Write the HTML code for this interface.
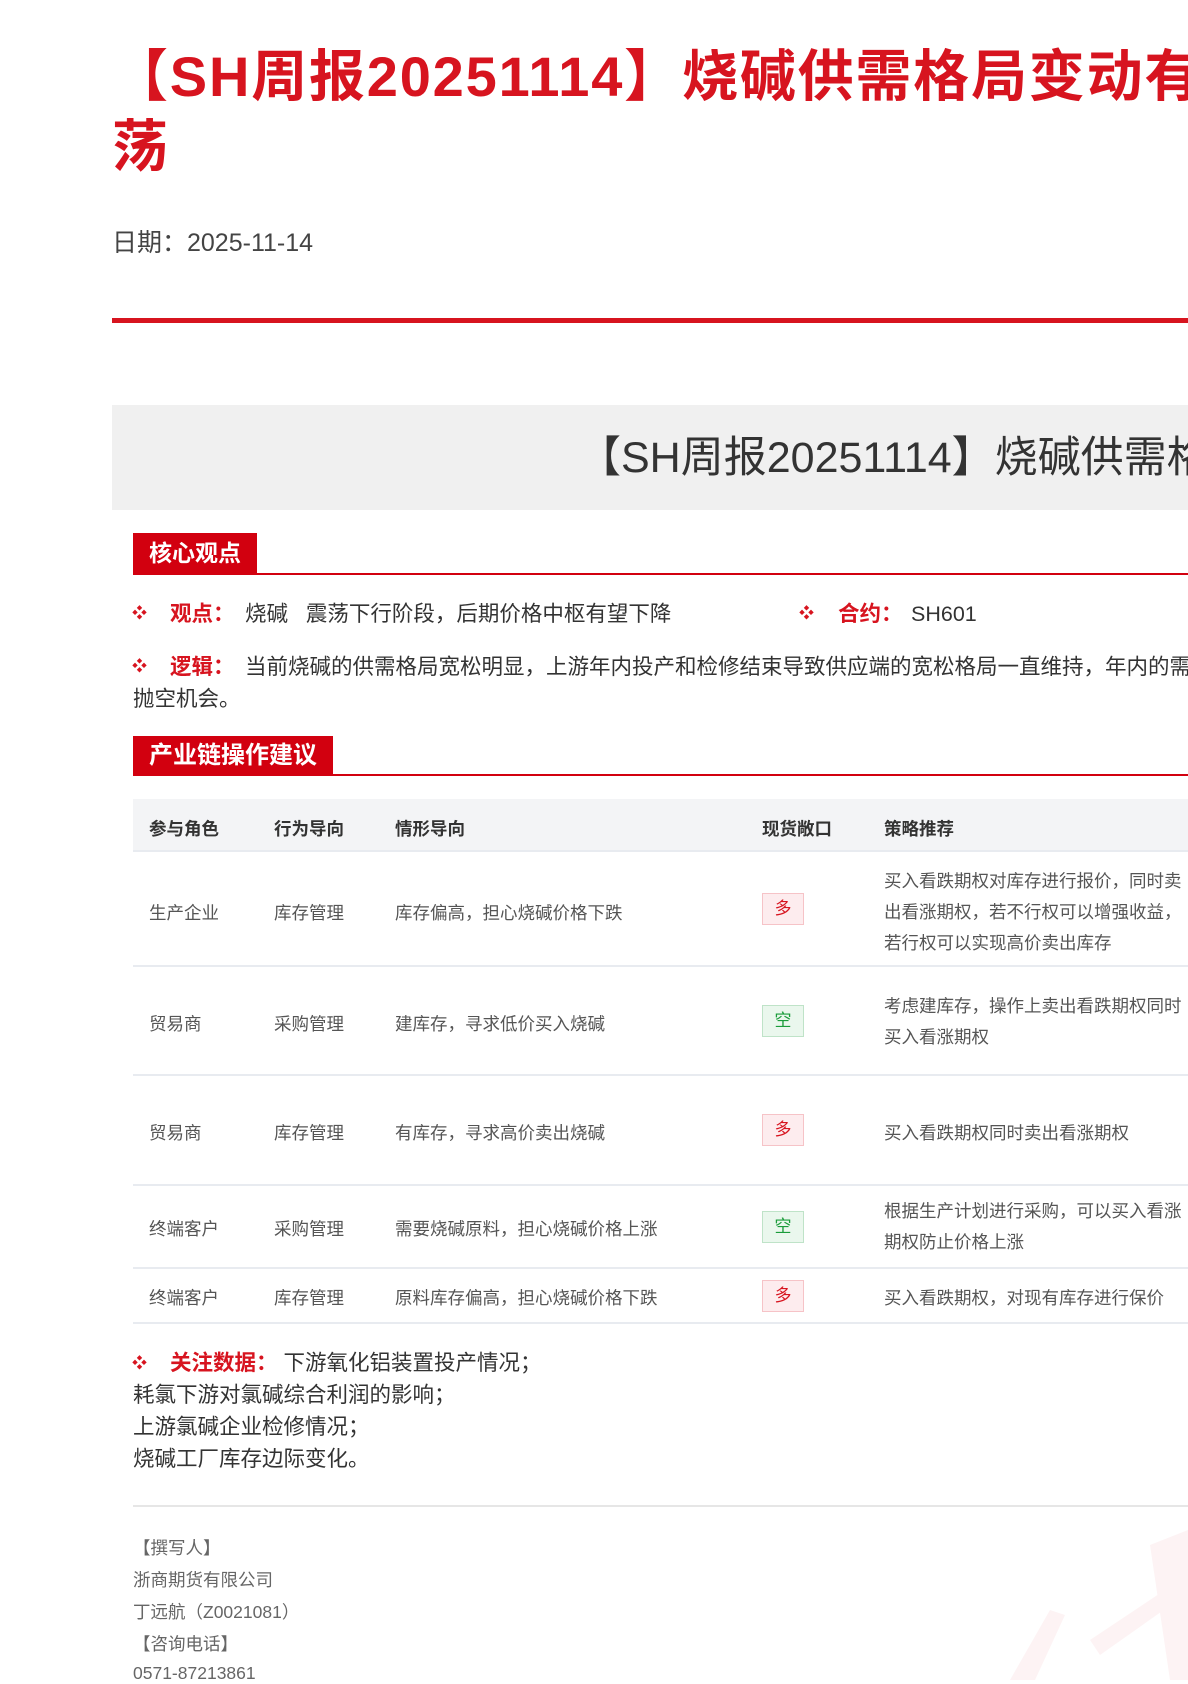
<!DOCTYPE html>
<html><head><meta charset="utf-8"><style>
*{margin:0;padding:0;box-sizing:border-box}
body{width:1188px;height:1680px;overflow:hidden;background:#fff;position:relative;font-family:"Liberation Sans","Noto Sans CJK SC",sans-serif;color:#333}
.a{position:absolute;white-space:nowrap}
.t{color:#d7141f;font-weight:bold;font-size:56px;line-height:70px;letter-spacing:1.8px}
.red{color:#d7141f}
.tag{position:absolute;left:133px;background:#d2000f;color:#fff;font-size:23px;font-weight:bold;padding:0 16px}
.hl{position:absolute;left:133px;right:0;height:2px;background:#d2000f}
.dia{position:absolute;color:#d7141f;font-size:15px;line-height:15px}
.b{font-size:21.5px;line-height:26px}
.th{font-size:17.5px;font-weight:bold;color:#333}
.td{font-size:17.5px;color:#555}
.row{position:absolute;left:133px;right:0;border-bottom:2px solid #e8ebf0}
.bd{position:absolute;left:762px;width:42px;height:32px;font-size:17px;line-height:30px;text-align:center;border:1px solid}
.duo{color:#d7141f;background:#fdecee;border-color:#f6c3c7}
.kong{color:#1a9c3a;background:#eaf7ed;border-color:#bfe3c8}
.w{font-size:17.5px;color:#666}
</style></head><body>
<div class="a t" style="left:112px;top:42px">【SH周报20251114】烧碱供需格局变动有限，价格震荡</div>
<div class="a t" style="left:112px;top:112px">荡</div>
<div class="a" style="left:112px;top:223px;font-size:25px;color:#444">日期：2025-11-14</div>
<div class="a" style="left:112px;right:0;top:318px;height:5px;background:#d7141f"></div>
<div class="a" style="left:112px;right:0;top:405px;height:105px;background:#f0f0f0"></div>
<div class="a" style="left:578px;top:432px;font-size:43px;line-height:52px;color:#333">【SH周报20251114】烧碱供需格局变动有限</div>

<div class="tag" style="top:533px;height:41px;line-height:41px">核心观点</div>
<div class="hl" style="top:573px"></div>
<div class="dia" style="left:132px;top:606px">❖</div>
<div class="a b" style="left:170px;top:601px"><b class="red">观点：</b></div>
<div class="a b" style="left:245px;top:601px">烧碱&nbsp;&nbsp;&nbsp;震荡下行阶段，后期价格中枢有望下降</div>
<div class="dia" style="left:799px;top:606px">❖</div>
<div class="a b" style="left:838px;top:601px"><b class="red">合约：</b></div>
<div class="a b" style="left:911px;top:601px">SH601</div>
<div class="dia" style="left:132px;top:659px">❖</div>
<div class="a b" style="left:170px;top:654px"><b class="red">逻辑：</b></div>
<div class="a b" style="left:245px;top:654px">当前烧碱的供需格局宽松明显，上游年内投产和检修结束导致供应端的宽松格局一直维持，年内的需求</div>
<div class="a b" style="left:133px;top:686px">抛空机会。</div>

<div class="tag" style="top:736px;height:39px;line-height:39px;font-size:24px">产业链操作建议</div>
<div class="hl" style="top:774px"></div>

<div class="a" style="left:133px;right:0;top:799px;height:53px;background:#f3f4f6;border-bottom:2px solid #e8ebf0"></div>
<div class="a th" style="left:149px;top:816px">参与角色</div>
<div class="a th" style="left:274px;top:816px">行为导向</div>
<div class="a th" style="left:395px;top:816px">情形导向</div>
<div class="a th" style="left:762px;top:816px">现货敞口</div>
<div class="a th" style="left:884px;top:816px">策略推荐</div>

<div class="row" style="top:852px;height:115px"></div>
<div class="a td" style="left:149px;top:900px">生产企业</div>
<div class="a td" style="left:274px;top:900px">库存管理</div>
<div class="a td" style="left:395px;top:900px">库存偏高，担心烧碱价格下跌</div>
<div class="bd duo" style="top:893px">多</div>
<div class="a td" style="left:884px;top:866px;line-height:31px">买入看跌期权对库存进行报价，同时卖<br>出看涨期权，若不行权可以增强收益，<br>若行权可以实现高价卖出库存</div>

<div class="row" style="top:967px;height:109px"></div>
<div class="a td" style="left:149px;top:1011px">贸易商</div>
<div class="a td" style="left:274px;top:1011px">采购管理</div>
<div class="a td" style="left:395px;top:1011px">建库存，寻求低价买入烧碱</div>
<div class="bd kong" style="top:1005px">空</div>
<div class="a td" style="left:884px;top:991px;line-height:31px">考虑建库存，操作上卖出看跌期权同时<br>买入看涨期权</div>

<div class="row" style="top:1076px;height:110px"></div>
<div class="a td" style="left:149px;top:1120px">贸易商</div>
<div class="a td" style="left:274px;top:1120px">库存管理</div>
<div class="a td" style="left:395px;top:1120px">有库存，寻求高价卖出烧碱</div>
<div class="bd duo" style="top:1114px">多</div>
<div class="a td" style="left:884px;top:1120px">买入看跌期权同时卖出看涨期权</div>

<div class="row" style="top:1186px;height:83px"></div>
<div class="a td" style="left:149px;top:1216px">终端客户</div>
<div class="a td" style="left:274px;top:1216px">采购管理</div>
<div class="a td" style="left:395px;top:1216px">需要烧碱原料，担心烧碱价格上涨</div>
<div class="bd kong" style="top:1211px">空</div>
<div class="a td" style="left:884px;top:1196px;line-height:31px">根据生产计划进行采购，可以买入看涨<br>期权防止价格上涨</div>

<div class="row" style="top:1269px;height:55px"></div>
<div class="a td" style="left:149px;top:1285px">终端客户</div>
<div class="a td" style="left:274px;top:1285px">库存管理</div>
<div class="a td" style="left:395px;top:1285px">原料库存偏高，担心烧碱价格下跌</div>
<div class="bd duo" style="top:1280px">多</div>
<div class="a td" style="left:884px;top:1285px">买入看跌期权，对现有库存进行保价</div>

<div class="dia" style="left:132px;top:1356px">❖</div>
<div class="a b" style="left:170px;top:1350px"><b class="red">关注数据：</b>&nbsp;下游氧化铝装置投产情况；</div>
<div class="a b" style="left:133px;top:1382px">耗氯下游对氯碱综合利润的影响；</div>
<div class="a b" style="left:133px;top:1414px">上游氯碱企业检修情况；</div>
<div class="a b" style="left:133px;top:1446px">烧碱工厂库存边际变化。</div>

<div class="a" style="left:133px;right:0;top:1505px;height:2px;background:#e6e6e6"></div>
<div class="a w" style="left:133px;top:1535px">【撰写人】</div>
<div class="a w" style="left:133px;top:1567px">浙商期货有限公司</div>
<div class="a w" style="left:133px;top:1599px">丁远航（Z0021081）</div>
<div class="a w" style="left:133px;top:1631px">【咨询电话】</div>
<div class="a w" style="left:133px;top:1663px">0571-87213861</div>
<svg class="a" style="left:980px;top:1510px" width="208" height="170"><path d="M170 35 L208 20 L208 170 L190 170 Z M110 130 L200 70 L205 85 L120 145 Z M30 170 L70 100 L85 105 L55 170 Z" fill="#fdf3f4"/></svg>
</body></html>
